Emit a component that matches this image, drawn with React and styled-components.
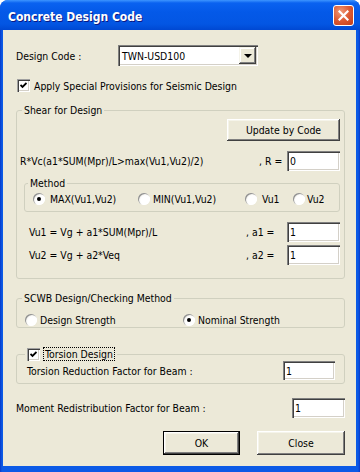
import styled, { createGlobalStyle } from "styled-components";

const GlobalStyle = createGlobalStyle`
  * { box-sizing: border-box; }
  body { margin: 0; background: #ffffff; }
`;

const Window = styled.div`
  width: 360px;
  height: 472px;
  display: flex;
  flex-direction: column;
  border-radius: 8px 8px 0 0;
  overflow: hidden;
  background: linear-gradient(to right, #0838c8 0, #0b5ae6 2px, #0b5ae6 calc(100% - 2px), #0838c8 100%);
  font-family: "DejaVu Sans Condensed", "Liberation Sans", sans-serif;
  font-size: 10.4px;
  color: #000;
`;

const TitleBar = styled.div`
  height: 30px;
  flex: none;
  display: flex;
  align-items: center;
  justify-content: space-between;
  padding: 0 6px 0 8px;
  background: linear-gradient(to bottom, #3d95ff 0, #0a62f0 3px, #0459e8 40%, #0356e3 80%, #0048d2 100%);
`;

const Title = styled.span`
  color: #fff;
  font-family: "DejaVu Sans Condensed", "Liberation Sans", sans-serif;
  font-weight: bold;
  font-size: 12px;
  text-shadow: 1px 1px 0 #0a1883;
  margin-top: 3px;
`;

const CloseButton = styled.div`
  width: 21px;
  height: 21px;
  border: 1px solid #fff;
  border-radius: 3px;
  display: grid;
  place-items: center;
  background: radial-gradient(circle at 35% 30%, #f09a78 0, #dc5a33 50%, #c23c18 100%);
`;

const Client = styled.div`
  flex: 1;
  margin: 0 4px 6px 3px;
  background: #ece9d8;
  padding: 15px 11px 0 13px;
  display: flex;
  flex-direction: column;
`;

const Row = styled.div`
  display: flex;
  align-items: center;
  margin-top: ${(p) => p.$mt || 0}px;
  padding-left: ${(p) => p.$pl || 0}px;
  justify-content: ${(p) => p.$justify || "flex-start"};
  gap: ${(p) => p.$gap || 0}px;
`;

const FieldLabel = styled.span`
  width: ${(p) => p.$w}px;
  flex: none;
  white-space: nowrap;
`;

const Formula = styled.span`
  flex: 1;
  white-space: nowrap;
`;

const ComboBox = styled.div`
  width: 140px;
  height: 21px;
  background: #fff;
  display: flex;
  align-items: center;
  justify-content: space-between;
  padding: 0 2px 0 4px;
  box-shadow: inset 1px 1px #808080, inset 2px 2px #404040, inset -1px -1px #fff, inset -2px -2px #d4d0c8;
`;

const DropButton = styled.div`
  width: 17px;
  height: 17px;
  background: #ece9d8;
  display: grid;
  place-items: center;
  box-shadow: inset -1px -1px #404040, inset 1px 1px #f5f4ea, inset -2px -2px #808080, inset 2px 2px #fff;

  &::after {
    content: "";
    border-left: 4px solid transparent;
    border-right: 4px solid transparent;
    border-top: 4px solid #000;
    margin-top: 1px;
  }
`;

const CheckBox = styled.span`
  width: 13px;
  height: 13px;
  flex: none;
  background: #fff;
  display: grid;
  place-items: center;
  margin-left: ${(p) => p.$ml || 0}px;
  box-shadow: inset 1px 1px #a0a0a0, inset 2px 2px #404040, inset -1px -1px #fff, inset -2px -2px #d4d0c8;
`;

const CheckText = styled.span`
  margin-left: ${(p) => p.$ml || 4}px;
  white-space: nowrap;
`;

const FocusText = styled.span`
  margin-left: 3px;
  padding: 0 1px;
  line-height: 12px;
  border: 1px dotted #000;
  white-space: nowrap;
`;

const Group = styled.fieldset`
  margin: ${(p) => p.$mt || 0}px 0 0 ${(p) => p.$ml || 0}px;
  padding: 0;
  min-width: 0;
  border: 1px solid #d0d0bf;
  border-radius: 3px;
`;

const Legend = styled.legend`
  margin-left: ${(p) => p.$ml || 5}px;
  padding: 0 2px;
  line-height: 13px;
  display: flex;
  align-items: center;
`;

const GroupBody = styled.div`
  padding: ${(p) => p.$pad};
`;

const TextBox = styled.input`
  width: ${(p) => p.$w}px;
  height: ${(p) => p.$h || 20}px;
  flex: none;
  border: none;
  outline: none;
  background: #fff;
  padding: 0 0 0 3px;
  font: inherit;
  color: #000;
  box-shadow: inset 1px 1px #808080, inset 2px 2px #404040, inset -1px -1px #fff, inset -2px -2px #d4d0c8;
`;

const Button = styled.button`
  width: ${(p) => p.$w}px;
  height: ${(p) => p.$h}px;
  padding: 0;
  background: #ece9d8;
  color: #000;
  font: inherit;
  border: ${(p) => (p.$default ? "1px solid #000" : "none")};
  box-shadow: inset -1px -1px #404040, inset 1px 1px #fff, inset -2px -2px #808080, inset 2px 2px #f5f4ea;
`;

const RadioItem = styled.label`
  display: flex;
  align-items: center;
  width: ${(p) => (p.$w ? `${p.$w}px` : "auto")};
  flex: none;
  white-space: nowrap;
`;

const RadioCircle = styled.span`
  width: 12px;
  height: 12px;
  border-radius: 50%;
  flex: none;
  margin-right: ${(p) => p.$gap || 4}px;
  display: grid;
  place-items: center;
  background: radial-gradient(circle at 62% 62%, #fff 0, #fff 45%, #e4e2d8 80%);
  box-shadow: inset 1px 1px 0 #909090, inset -1px -1px 0 #fff;

  &::after {
    content: "";
    width: 4px;
    height: 4px;
    border-radius: 50%;
    background: ${(p) => (p.$on ? "#000" : "transparent")};
  }
`;

const Check = () => (
  <svg width="7" height="7" viewBox="0 0 7 7">
    <polyline points="0.5,3 2.5,5 6.5,1" fill="none" stroke="#000" strokeWidth="1.8" />
  </svg>
);

const Radio = ({ w, on, gap, children }) => (
  <RadioItem $w={w}>
    <RadioCircle $on={on} $gap={gap} />
    {children}
  </RadioItem>
);

export default function App() {
  return (
    <>
      <GlobalStyle />
      <Window>
        <TitleBar>
          <Title>Concrete Design Code</Title>
          <CloseButton>
            <svg width="11" height="11" viewBox="0 0 11 11">
              <path d="M1.5 1.5 L9.5 9.5 M9.5 1.5 L1.5 9.5" stroke="#fff" strokeWidth="2.2" strokeLinecap="square" />
            </svg>
          </CloseButton>
        </TitleBar>

        <Client>
          <Row>
            <FieldLabel $w={102}>Design Code :</FieldLabel>
            <ComboBox>
              <span>TWN-USD100</span>
              <DropButton />
            </ComboBox>
          </Row>

          <Row $mt={13}>
            <CheckBox $ml={1}>
              <Check />
            </CheckBox>
            <CheckText>Apply Special Provisions for Seismic Design</CheckText>
          </Row>

          <Group $mt={12}>
            <Legend>Shear for Design</Legend>
            <GroupBody $pad="2px 4px 13px 3px">
              <Row $justify="flex-end">
                <Button $w={113} $h={22}>Update by Code</Button>
              </Row>
              <Row $mt={10}>
                <Formula>R*Vc(a1*SUM(Mpr)/L&gt;max(Vu1,Vu2)/2)</Formula>
                <FieldLabel $w={28}>, R =</FieldLabel>
                <TextBox $w={53} defaultValue="0" readOnly />
              </Row>
              <Group $mt={6} $ml={4}>
                <Legend $ml={3}>Method</Legend>
                <GroupBody $pad="3px 0 6px 8px">
                  <Row>
                    <Radio w={105} on gap={5}>MAX(Vu1,Vu2)</Radio>
                    <Radio w={107} gap={3}>MIN(Vu1,Vu2)</Radio>
                    <Radio w={48} gap={5}>Vu1</Radio>
                    <Radio gap={2}>Vu2</Radio>
                  </Row>
                </GroupBody>
              </Group>
              <Row $mt={10} $pl={9}>
                <Formula>Vu1 = Vg + a1*SUM(Mpr)/L</Formula>
                <FieldLabel $w={41}>, a1 =</FieldLabel>
                <TextBox $w={53} defaultValue="1" readOnly />
              </Row>
              <Row $mt={3} $pl={9}>
                <Formula>Vu2 = Vg + a2*Veq</Formula>
                <FieldLabel $w={41}>, a2 =</FieldLabel>
                <TextBox $w={53} defaultValue="1" readOnly />
              </Row>
            </GroupBody>
          </Group>

          <Group $mt={13}>
            <Legend $ml={5}>SCWB Design/Checking Method</Legend>
            <GroupBody $pad="9px 0 1px 8px">
              <Row>
                <Radio w={158} gap={3}>Design Strength</Radio>
                <Radio on gap={3}>Nominal Strength</Radio>
              </Row>
            </GroupBody>
          </Group>

          <Group $mt={19}>
            <Legend $ml={8}>
              <CheckBox>
                <Check />
              </CheckBox>
              <FocusText>Torsion Design</FocusText>
            </Legend>
            <GroupBody $pad="0 9px 3px 10px">
              <Row>
                <Formula>Torsion Reduction Factor for Beam :</Formula>
                <TextBox $w={52} $h={19} defaultValue="1" readOnly />
              </Row>
            </GroupBody>
          </Group>

          <Row $mt={14}>
            <Formula>Moment Redistribution Factor for Beam :</Formula>
            <TextBox $w={53} defaultValue="1" readOnly />
          </Row>

          <Row $mt={13} $justify="flex-end" $gap={17}>
            <Button $w={77} $h={24} $default>OK</Button>
            <Button $w={88} $h={24}>Close</Button>
          </Row>
        </Client>
      </Window>
    </>
  );
}
